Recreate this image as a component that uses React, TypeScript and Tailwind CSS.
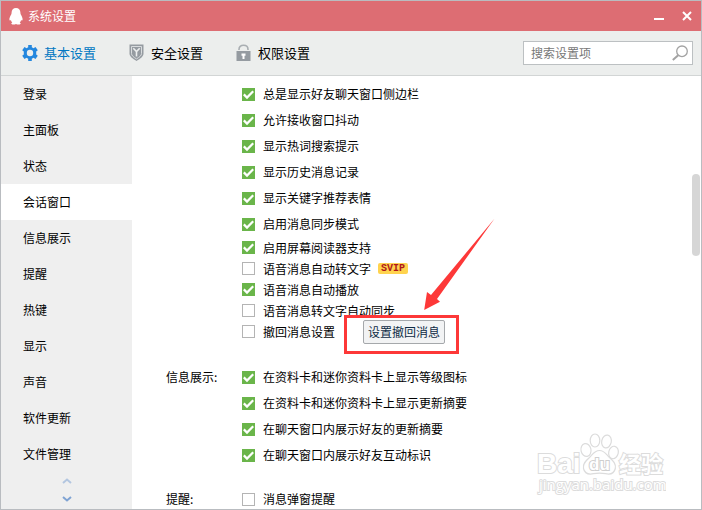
import { useState } from "react";

const menu = [
  "登录",
  "主面板",
  "状态",
  "会话窗口",
  "信息展示",
  "提醒",
  "热键",
  "显示",
  "声音",
  "软件更新",
  "文件管理",
];

const chatOptions = [
  { text: "总是显示好友聊天窗口侧边栏", on: true },
  { text: "允许接收窗口抖动", on: true },
  { text: "显示热词搜索提示", on: true },
  { text: "显示历史消息记录", on: true },
  { text: "显示关键字推荐表情", on: true },
  { text: "启用消息同步模式", on: true },
];

const infoOptions = [
  { text: "在资料卡和迷你资料卡上显示等级图标", on: true },
  { text: "在资料卡和迷你资料卡上显示更新摘要", on: true },
  { text: "在聊天窗口内展示好友的更新摘要", on: true },
  { text: "在聊天窗口内展示好友互动标识", on: true },
];

function Penguin() {
  return (
    <svg width="14" height="18" viewBox="0 0 14 18" fill="#fff">
      <path d="M7 1C4.300 1 2.600 3 2.600 5.600c0 .7-.1 1.200-.4 1.800C1.200 9.200.2 11 .4 12.600c.1 1 .6 1.300 1.500.3.200 1 .7 1.900 1.400 2.600-1.300.5-1.400 1.700.1 1.900 1.400.2 2.700 0 3.600-.5.900.5 2.200.7 3.600.5 1.500-.2 1.400-1.400.1-1.900.7-.7 1.200-1.600 1.400-2.600.9 1 1.400.7 1.500-.3.200-1.600-.8-3.400-1.800-5.200-.3-.6-.4-1.100-.4-1.800C11.400 3 9.700 1 7 1z" />
    </svg>
  );
}

function GearIcon() {
  return (
    <svg width="16" height="18" viewBox="0 0 16 18">
      <path
        fill="#2487de"
        fillRule="evenodd"
        d="M6.200 1h3.600v2.200l1.700 1 2-1.100L15.800 6.300 14.200 7.600v2.800l1.600 1.300-2.300 3.200-2-1.100-1.700 1V17H6.200v-2.200l-1.700-1-2 1.100L.2 11.700l1.600-1.300V7.600L.2 6.300l2.300-3.200 2 1.100 1.700-1zM8 5.800a3.200 3.200 0 1 0 0 6.400 3.200 3.200 0 0 0 0-6.400z"
      />
    </svg>
  );
}

function ShieldIcon() {
  return (
    <svg width="16" height="18" viewBox="0 0 16 18">
      <path fill="#959ba1" d="M.500.500h14v9c0 3-3 5-7 7.500-4-2.500-7-4.500-7-7.500z" />
      <path fill="none" stroke="#d9dcde" d="M2.500 2.500h10v7c0 2.100-2 3.600-5 5.400-3-1.800-5-3.300-5-5.400z" />
      <path fill="none" stroke="#eceeee" strokeWidth="1.600" d="M4.300 4.300l3.200 3.200 3.200-3.200M7.500 7.300v5.200" />
    </svg>
  );
}

function LockIcon() {
  return (
    <svg width="16" height="18" viewBox="0 0 16 18">
      <path fill="none" stroke="#a9aeb2" strokeWidth="1.600" d="M3 6V5.400C3 3 4.800 1.300 7.500 1.300S12 3 12 5.400V6" />
      <path fill="#959ba1" d="M.500 7h14v10H.500z" />
      <path fill="#fff" d="M5.500 9.500h4v2.200h-1V15h-2v-3.300h-1z" />
    </svg>
  );
}

const tabs = [
  { text: "基本设置", icon: <GearIcon /> },
  { text: "安全设置", icon: <ShieldIcon /> },
  { text: "权限设置", icon: <LockIcon /> },
];

function Check({ text, on }: { text: string; on?: boolean }) {
  return (
    <label className="flex items-center gap-2">
      <span className="grid">
        <input
          type="checkbox"
          defaultChecked={on}
          className="peer col-start-1 row-start-1 size-[13px] appearance-none border border-[#b4b4b4] bg-white checked:border-[#6ab54a] checked:bg-[#6ab54a]"
        />
        <svg
          viewBox="0 0 13 13"
          className="pointer-events-none invisible col-start-1 row-start-1 size-[13px] peer-checked:visible"
        >
          <path d="M1.800 6.400l3.200 3.200 6.200-6.400" fill="none" stroke="#fff" strokeWidth="2.200" />
        </svg>
      </span>
      {text}
    </label>
  );
}

// red frame round the button plus the arrow that points at it
function Callout() {
  return (
    <svg
      width="152"
      height="137"
      viewBox="344 218 152 137"
      className="pointer-events-none absolute -top-[102px] -left-[19px]"
    >
      <rect x="345.500" y="316.500" width="112" height="36" fill="none" stroke="#fd3838" strokeWidth="3" />
      <path fill="#fd3838" d="M494.600 218.600L437 299l3 2.800-15.800 8.200L427 292l4 3z" />
    </svg>
  );
}

function Watermark() {
  return (
    <svg
      width="130"
      height="64"
      viewBox="536 432 130 64"
      className="pointer-events-none absolute right-[35px] bottom-[13px]"
      fill="#fff"
      stroke="#dcdcdc"
    >
      <g strokeWidth="1.200">
        <ellipse cx="586" cy="450" rx="5" ry="6.500" transform="rotate(-12 586 450)" />
        <ellipse cx="595" cy="440.500" rx="4.800" ry="6.500" />
        <ellipse cx="606.500" cy="441.500" rx="4.800" ry="6.500" transform="rotate(12 606.500 441.500)" />
        <ellipse cx="613.500" cy="452.500" rx="4.800" ry="6.300" transform="rotate(12 613.500 452.500)" />
        <path d="M599.500 450.500c-5 0-7 4-10 7-4 3.500-7 6.500-6 11 1.200 5.500 6 6 10 5.200 4-.8 8-.8 12 0s8.600.3 9.800-5.200c1-4.500-2-7.500-5.800-11-3.200-3-5-7-10-7z" />
      </g>
      <g strokeWidth="2" paintOrder="stroke" fontWeight="700">
        <text x="537" y="473" fontSize="28" fontFamily="Liberation Sans, sans-serif">
          Bai
        </text>
        <text x="589" y="470" fontSize="17" fontFamily="Liberation Sans, sans-serif" stroke="#cfcfcf">
          du
        </text>
        <text x="619" y="472" fontSize="22" fontFamily="Noto Sans CJK SC, sans-serif">
          经验
        </text>
      </g>
      <text x="539" y="490" fontSize="15" fontFamily="Open Sans, sans-serif" strokeWidth="2" paintOrder="stroke">
        jingyan.baidu.com
      </text>
    </svg>
  );
}

export default function App() {
  const [active, setActive] = useState("会话窗口");
  const [tab, setTab] = useState("基本设置");

  return (
    <div className="flex h-screen flex-col border border-[#b9bcc0] bg-white font-['Noto_Sans_CJK_SC',sans-serif] text-xs text-black">
      <header className="flex h-[30px] shrink-0 items-center bg-[#dd6d73] pr-0.5 pl-2 text-white">
        <Penguin />
        <h1 className="ml-[5px] flex-1">系统设置</h1>
        <button aria-label="最小化" className="grid size-6 place-items-center">
          <svg width="12" height="12" viewBox="0 0 12 12">
            <path d="M1 9h10" stroke="#fff" strokeWidth="2" />
          </svg>
        </button>
        <button aria-label="关闭" className="ml-1 grid size-6 place-items-center">
          <svg width="12" height="12" viewBox="0 0 12 12">
            <path d="M2 2l8 8M10 2l-8 8" stroke="#fff" strokeWidth="2" />
          </svg>
        </button>
      </header>

      <div className="flex h-[45px] shrink-0 items-center border-b border-[#d2d5d5] bg-[#eceeed] pr-2 pl-[21px]">
        <nav className="flex flex-1 text-[13px]">
          {tabs.map((t) => (
            <button
              key={t.text}
              onClick={() => setTab(t.text)}
              className={
                tab === t.text
                  ? "flex w-[107px] items-center gap-1.5 text-[#0077c2]"
                  : "flex w-[107px] items-center gap-1.5"
              }
            >
              {t.icon}
              {t.text}
            </button>
          ))}
        </nav>
        <form className="flex h-6 w-[170px] items-center border border-[#bcc0c2] bg-white pr-1 pl-[7px]">
          <input
            type="text"
            aria-label="搜索设置项"
            placeholder="搜索设置项"
            className="min-w-0 flex-1 outline-none placeholder:text-[#777]"
          />
          <svg width="16" height="16" viewBox="0 0 16 16" fill="none" stroke="#a3a3a3">
            <circle cx="10" cy="6.300" r="5.300" strokeWidth="1.300" />
            <path d="M6.200 10.200L.800 15" strokeWidth="2" />
          </svg>
        </form>
      </div>

      <div className="flex min-h-0 flex-1">
        <aside className="flex w-[131px] shrink-0 flex-col bg-[#efefef]">
          {menu.map((m) => (
            <button
              key={m}
              onClick={() => setActive(m)}
              className={
                active === m
                  ? "h-9 shrink-0 bg-white pl-[22px] text-left"
                  : "h-9 shrink-0 pl-[22px] text-left"
              }
            >
              {m}
            </button>
          ))}
          <div className="flex flex-col items-center">
            <button aria-label="向上" className="grid h-[18px] place-items-center">
              <svg width="10" height="6" viewBox="0 0 10 6">
                <path d="M1 5l4-3.500L9 5" fill="none" stroke="#b3c6e0" strokeWidth="2" />
              </svg>
            </button>
            <button aria-label="向下" className="grid h-[18px] place-items-center">
              <svg width="10" height="6" viewBox="0 0 10 6">
                <path d="M1 1l4 3.500L9 1" fill="none" stroke="#7fa3d3" strokeWidth="2" />
              </svg>
            </button>
          </div>
        </aside>

        <main className="relative flex min-w-0 flex-1 overflow-hidden">
          <div className="flex-1 pt-[5px] pl-[34px]">
            <section className="pl-[76px]">
              {chatOptions.map((o) => (
                <div key={o.text} className="flex h-[26px] items-center">
                  <Check text={o.text} on={o.on} />
                </div>
              ))}
              <div className="flex h-[21px] items-center">
                <Check text="启用屏幕阅读器支持" on />
              </div>
              <div className="flex h-[21px] items-center gap-[7px]">
                <Check text="语音消息自动转文字" />
                <span className="flex h-[11px] w-[30px] items-center justify-center rounded-xs bg-[#ffd34e] font-['Liberation_Mono',monospace] text-[10px] font-bold text-[#b01818]">
                  SVIP
                </span>
              </div>
              <div className="flex h-[21px] items-center">
                <Check text="语音消息自动播放" on />
              </div>
              <div className="flex h-[21px] items-center">
                <Check text="语音消息转文字自动同步" />
              </div>
              <div className="flex h-[21px] items-center gap-7">
                <Check text="撤回消息设置" />
                <div className="relative">
                  <button className="block h-6 w-[82px] rounded-xs border border-[#a5a8ab] bg-[#f2f3f4] text-[#0d2b45]">
                    设置撤回消息
                  </button>
                  <Callout />
                </div>
              </div>
            </section>

            <section className="mt-[22px] flex">
              <h2 className="w-[76px] leading-[26px]">信息展示:</h2>
              <div>
                {infoOptions.map((o) => (
                  <div key={o.text} className="flex h-[26px] items-center">
                    <Check text={o.text} on={o.on} />
                  </div>
                ))}
              </div>
            </section>

            <section className="mt-[18px] flex">
              <h2 className="w-[76px] leading-[26px]">提醒:</h2>
              <div className="flex h-[26px] items-center">
                <Check text="消息弹窗提醒" />
              </div>
            </section>
          </div>
          <div className="w-[9px] shrink-0 pt-[98px]">
            <div className="h-[82px] w-2 rounded-full bg-[#d6d6d6]" />
          </div>
          <Watermark />
        </main>
      </div>
    </div>
  );
}
